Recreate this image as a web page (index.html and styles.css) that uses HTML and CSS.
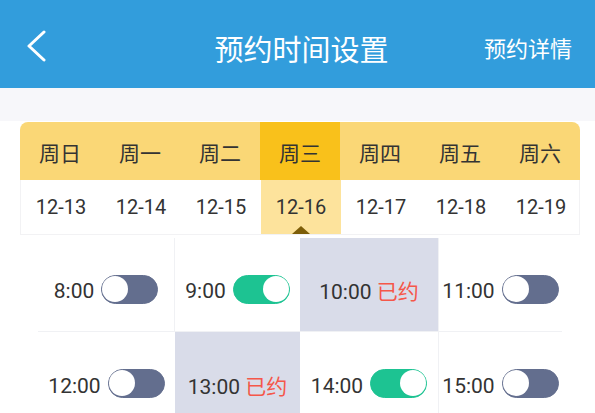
FILE: index.html
```html
<!DOCTYPE html>
<html>
<head>
  <meta charset="UTF-8">
  <title>预约时间设置</title>
  <link rel="stylesheet" href="styles.css">
</head>
<body>
  <header class="top-bar">
    <span class="back-btn">
      <svg width="22" height="32" viewBox="0 0 22 32">
        <path d="M19 2 L4 16 L19 30" fill="none" stroke="#fff" stroke-width="3" stroke-linecap="round" stroke-linejoin="round"/>
      </svg>
    </span>
    <h1 class="title">预约时间设置</h1>
    <span class="detail-link">预约详情</span>
  </header>

  <div class="spacer"></div>

  <div class="week-card">
    <div class="week-row">
      <div class="day">周日</div>
      <div class="day">周一</div>
      <div class="day">周二</div>
      <div class="day active">周三</div>
      <div class="day">周四</div>
      <div class="day">周五</div>
      <div class="day">周六</div>
    </div>
    <div class="date-row">
      <div class="date">12-13</div>
      <div class="date">12-14</div>
      <div class="date">12-15</div>
      <div class="date active">12-16</div>
      <div class="date">12-17</div>
      <div class="date">12-18</div>
      <div class="date">12-19</div>
    </div>
  </div>

  <div class="slot-grid">
    <div class="slot line-r line-b">
      <span class="time">8:00</span><span class="switch"><span class="knob"></span></span>
    </div>
    <div class="slot line-b">
      <span class="time">9:00</span><span class="switch on"><span class="knob"></span></span>
    </div>
    <div class="slot booked line-b">
      <span class="time">10:00 <span class="booked-tag">已约</span></span>
    </div>
    <div class="slot line-l line-b">
      <span class="time">11:00</span><span class="switch"><span class="knob"></span></span>
    </div>

    <div class="slot">
      <span class="time">12:00</span><span class="switch"><span class="knob"></span></span>
    </div>
    <div class="slot booked">
      <span class="time">13:00 <span class="booked-tag">已约</span></span>
    </div>
    <div class="slot">
      <span class="time">14:00</span><span class="switch on"><span class="knob"></span></span>
    </div>
    <div class="slot line-l">
      <span class="time">15:00</span><span class="switch"><span class="knob"></span></span>
    </div>
  </div>
</body>
</html>
```

FILE: styles.css
```css
body {
  margin: 0;
  width: 595px;
  overflow: hidden;
  background: #fff;
  color: #333;
  font-family: Roboto, "Noto Sans CJK SC", sans-serif;
}

.top-bar {
  height: 88px;
  box-sizing: border-box;
  padding: 8px 23px 0 31px;
  background: #329ddc;
  color: #fff;
  display: grid;
  grid-template-columns: 1fr auto 1fr;
  align-items: center;
}

.back-btn {
  display: flex;
  margin-left: -6px;
  margin-top: -4px;
}

.title {
  margin: 0;
  font-size: 29px;
  font-weight: normal;
  font-family: "Noto Sans CJK SC", sans-serif;
}

.detail-link {
  justify-self: end;
  font-size: 22px;
  font-family: "Noto Sans CJK SC", sans-serif;
  margin-top: -3px;
}

.spacer {
  height: 33px;
  background: #f7f7fa;
  margin-bottom: 1px;
}

.week-card {
  margin-left: 20px;
  width: 560px;
}

.week-row,
.date-row {
  display: grid;
  grid-template-columns: repeat(7, 80px);
}

.week-row {
  height: 58px;
  background: #fad776;
  border-radius: 8px 8px 0 0;
  overflow: hidden;
}

.day {
  display: flex;
  align-items: center;
  justify-content: center;
  font-size: 21px;
  font-family: "Noto Sans CJK SC", sans-serif;
  color: #333;
  padding-top: 2px;
}

.day.active {
  background: #f9c11b;
}

.date-row {
  height: 55px;
  box-sizing: border-box;
  border: 1px solid #f2f2f4;
  border-top: none;
}

.date {
  display: flex;
  align-items: center;
  justify-content: center;
  font-size: 20px;
  color: #333;
  position: relative;
}

.date.active {
  background: #fde39c;
}

.date.active::after {
  content: "";
  position: absolute;
  left: 50%;
  bottom: 0;
  margin-left: -9px;
  border-left: 9px solid transparent;
  border-right: 9px solid transparent;
  border-bottom: 8px solid #7d5d08;
}

.slot-grid {
  margin: 3px 0 0 38px;
  display: grid;
  grid-template-columns: 137px 125px 138px 124px;
  grid-auto-rows: 94px;
}

.slot {
  display: flex;
  align-items: center;
  justify-content: center;
  padding-top: 9px;
  box-sizing: border-box;
}

.slot.booked {
  background: #d9dce9;
}

.line-r {
  border-right: 1px solid #f0f1f4;
}

.line-l {
  border-left: 1px solid #f0f1f4;
}

.line-b {
  border-bottom: 1px solid #f0f1f4;
}

.time {
  font-size: 21px;
  line-height: 28px;
  color: #333;
  margin-top: 4px;
}

.booked-tag {
  color: #f5574a;
  font-family: "Noto Sans CJK SC", sans-serif;
}

.switch {
  margin-left: 7px;
  width: 57px;
  height: 29px;
  box-sizing: border-box;
  border: 1.5px solid #636e8e;
  border-radius: 15px;
  background: #636e8e;
  display: flex;
  justify-content: flex-start;
}

.switch.on {
  border-color: #1dc392;
  background: #1dc392;
  justify-content: flex-end;
}

.knob {
  width: 26px;
  height: 26px;
  border-radius: 50%;
  background: #fff;
}
```
